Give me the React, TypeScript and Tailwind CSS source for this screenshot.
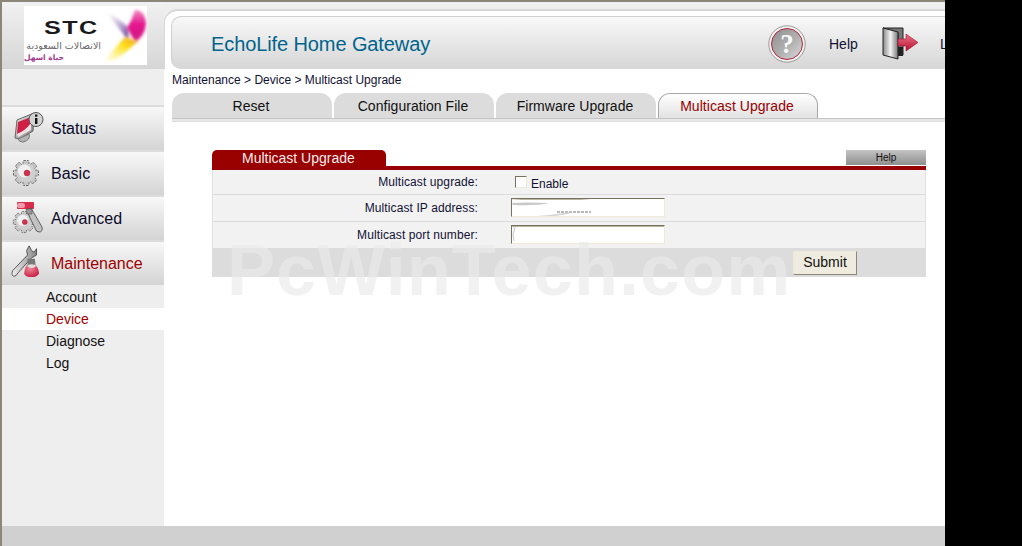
import React from "react";

const ff = { fontFamily: '"Liberation Sans", Arial, sans-serif' };

function StatusIcon() {
  return (
    <svg width="34" height="34" viewBox="0 0 34 34">
      <defs>
        <linearGradient id="st1" x1="0" y1="0" x2="1" y2="1"><stop offset="0" stopColor="#f2f2f2" /><stop offset="1" stopColor="#777" /></linearGradient>
      </defs>
      <path d="M6 9 L23 2 L22 20 L9 28 L4 27 Z" fill="url(#st1)" stroke="#666" strokeWidth="1" />
      <path d="M7 11 L20 6 L20 12 Q15 20 6 23 Z" fill="#d01f44" />
      <path d="M6 23 Q14 20 20 12 L20 19 L7 26 Z" fill="#f0dfe2" />
      <path d="M7 28 Q14 25 18 23 Q20 29 12 31 Q8 31 7 28 Z" fill="#b5b5b5" stroke="#777" />
      <circle cx="25" cy="8.5" r="7" fill="#d2d2d2" stroke="#555" />
      <rect x="24" y="7" width="2.4" height="6" fill="#111" />
      <rect x="24" y="3.5" width="2.4" height="2.2" fill="#111" />
    </svg>
  );
}

function Gear({ x = 0, y = 0, r = 1 }: { x?: number; y?: number; r?: number }) {
  const teeth = [0, 45, 90, 135, 180, 225, 270, 315];
  return (
    <g transform={`translate(${x} ${y}) scale(${r})`}>
      {teeth.map((a) => (
        <rect key={a} x="-3" y="-12.5" width="6" height="6" rx="1" fill="#c4c4c4" stroke="#555" strokeWidth="0.8" strokeDasharray="2 1" transform={`rotate(${a})`} />
      ))}
      <circle r="9.5" fill="#cfcfcf" />
      <circle cx="-1.5" cy="-2" r="6.5" fill="#f0f0f0" />
      <circle cx="1" cy="0" r="3" fill="#d0304e" stroke="#a52a40" strokeWidth="0.5" />
    </g>
  );
}

function BasicIcon() {
  return (
    <svg width="34" height="34" viewBox="0 0 34 34">
      <Gear x={15} y={17} r={1} />
    </svg>
  );
}

function AdvancedIcon() {
  return (
    <svg width="34" height="34" viewBox="0 0 34 34">
      <rect x="6" y="1" width="17" height="7" rx="1" fill="#d92b4b" />
      <rect x="6" y="2" width="8" height="5" rx="2" fill="#f29aaa" />
      <Gear x={13} y={21} r={0.85} />
      <path d="M16 9 L20 7 L31 26 Q32 31 28 31 Q25 31 24 27 L19 17 Z" fill="#c2c2c2" stroke="#444" strokeWidth="0.8" />
      <path d="M15 8 h6 v5 h-5 z" fill="#999" stroke="#444" strokeWidth="0.5" />
    </svg>
  );
}

function MaintenanceIcon() {
  return (
    <svg width="28" height="33" viewBox="0 0 34 36" preserveAspectRatio="none">
      <defs>
        <linearGradient id="mt1" x1="0" y1="0" x2="1" y2="0"><stop offset="0" stopColor="#eee" /><stop offset="1" stopColor="#888" /></linearGradient>
        <radialGradient id="mt2" cx="0.4" cy="0.3" r="0.8"><stop offset="0" stopColor="#f08497" /><stop offset="1" stopColor="#c3163a" /></radialGradient>
      </defs>
      <path d="M22 1 L19 6 L20 11 L2 28 Q0 33 3 34 Q6 35 9 30 L25 14 L31 11 L31 4 L28 8 L25 6 Z" fill="url(#mt1)" stroke="#444" strokeWidth="1" />
      <path d="M20 15 L29 15 L30 23 L20 23 Z" fill="#777" />
      <path d="M19 22 L30 22 Q34 26 34 31 Q32 35 25 35 Q17 35 16 31 Q16 26 19 22 Z" fill="url(#mt2)" />
      <ellipse cx="25" cy="23" rx="5" ry="2" fill="#ddd" />
    </svg>
  );
}

function HelpIcon() {
  return (
    <svg width="38" height="38" viewBox="0 0 38 38" className="shrink-0">
      <defs>
        <linearGradient id="hp1" x1="0" y1="0" x2="1" y2="1"><stop offset="0" stopColor="#8e8e8e" /><stop offset="0.55" stopColor="#b0b0b0" /><stop offset="1" stopColor="#dcdcdc" /></linearGradient>
      </defs>
      <circle cx="19" cy="19" r="18.2" fill="#f4f4f4" stroke="#999" />
      <circle cx="19" cy="19" r="15.5" fill="url(#hp1)" stroke="#b3263f" strokeWidth="1" />
      <text x="19" y="28" textAnchor="middle" fontSize="27" fontWeight="700" fill="#fafafa" fontFamily='"Liberation Serif", serif'>?</text>
    </svg>
  );
}

function LogoutIcon() {
  return (
    <svg width="38" height="34" viewBox="0 0 38 34" className="shrink-0">
      <defs>
        <linearGradient id="dr1" x1="0" y1="0" x2="1" y2="0"><stop offset="0" stopColor="#8a8a8a" /><stop offset="0.5" stopColor="#f4f4f4" /><stop offset="1" stopColor="#777" /></linearGradient>
        <linearGradient id="ar1" x1="0" y1="0" x2="0" y2="1"><stop offset="0" stopColor="#ef7389" /><stop offset="1" stopColor="#b51030" /></linearGradient>
      </defs>
      <path d="M1 1 H21 V28 H16 V6 Z" fill="#777" stroke="#222" />
      <rect x="16" y="20" width="5" height="9" fill="#222" />
      <path d="M1 1 L16 5 V32 L1 28 Z" fill="url(#dr1)" stroke="#222" />
      <path d="M16 12 H24 V7 L36 15.5 L24 24 V19 H16 Z" fill="url(#ar1)" stroke="#9a1028" strokeWidth="0.6" />
    </svg>
  );
}

function StcMark() {
  return (
    <svg width="46" height="59" viewBox="0 0 46 59" className="shrink-0">
      <defs>
        <filter id="bl1" x="-30%" y="-30%" width="160%" height="160%"><feGaussianBlur stdDeviation="1.4" /></filter>
        <linearGradient id="ppl" x1="0" y1="0" x2="1" y2="1"><stop offset="0" stopColor="#c9b8dc" stopOpacity="0.1" /><stop offset="1" stopColor="#5b2a8c" /></linearGradient>
        <linearGradient id="pk" x1="0" y1="0" x2="0" y2="1"><stop offset="0" stopColor="#f08cc0" /><stop offset="0.45" stopColor="#e5128f" /><stop offset="1" stopColor="#d0207f" /></linearGradient>
        <linearGradient id="yl" x1="0" y1="1" x2="1" y2="0"><stop offset="0" stopColor="#fff7a0" stopOpacity="0.25" /><stop offset="0.6" stopColor="#fde01a" /><stop offset="1" stopColor="#f39a2a" /></linearGradient>
      </defs>
      <path d="M6 7 Q18 12 28 22 L27 34 Q16 20 6 7 Z" fill="url(#ppl)" filter="url(#bl1)" />
      <path d="M34 4 Q44 4 45 18 Q44 30 34 36 L26 22 Q31 14 34 4 Z" fill="url(#pk)" filter="url(#bl1)" />
      <path d="M24 31 L30 33 Q36 35 37 35 Q28 44 14 54 Q7 56 4 54 Q14 42 24 31 Z" fill="url(#yl)" filter="url(#bl1)" />
    </svg>
  );
}

const navItems = [
  { label: "Status", icon: <StatusIcon /> },
  { label: "Basic", icon: <BasicIcon /> },
  { label: "Advanced", icon: <AdvancedIcon /> },
  { label: "Maintenance", icon: <MaintenanceIcon />, active: true },
];

const subItems = ["Account", "Device", "Diagnose", "Log"];
const tabs = ["Reset", "Configuration File", "Firmware Upgrade", "Multicast Upgrade"];

function Field({ label, children, h, border = true }: { label: string; children: React.ReactNode; h: string; border?: boolean }) {
  return (
    <div className={`flex items-center bg-[#f2f2f2] ${h} ${border ? "border-b border-[#dcdcdc]" : ""}`}>
      <div className="w-[265px] text-right text-[12px] leading-none tracking-[0.1px] text-[#111133]">{label}</div>
      {children}
    </div>
  );
}

function TextInput({ smear }: { smear?: boolean }) {
  return (
    <div className="relative mb-[2px] ml-[33px] h-[19px] w-[154px] overflow-hidden border border-[#efead8] border-l-[#77735f] border-t-[#77735f] bg-white">
      <div className="h-px w-full bg-[#b9b5a2]" />
      {smear ? (
        <svg width="154" height="19" className="absolute left-[-1px] top-[-1px]">
          <path d="M-2 1 Q40 6 80 1 L154 1 L154 2 L70 4 Q50 9 14 8 Z" fill="#fff" />
          <path d="M1 5 Q14 4 38 5 Q26 8 2 7 Z" fill="#c8c8c8" />
          <path d="M46 14 H80" stroke="#a3a3a3" strokeWidth="1.4" strokeDasharray="3 1" />
          <path d="M2 19 Q30 20 58 15" stroke="#d2d2d2" strokeWidth="1.5" fill="none" />
        </svg>
      ) : (
        <svg width="154" height="19" className="absolute left-[-1px] top-[-1px]">
          <path d="M2 3 L4 3 L2 9 L3 16" stroke="#cfcfcf" strokeWidth="1.2" fill="none" />
        </svg>
      )}
    </div>
  );
}

export default function App() {
  return (
    <div className="relative flex h-[546px] w-[1022px] overflow-hidden bg-black" style={ff}>
      <div className="flex w-[945px] flex-col border-l-2 border-t-2 border-[#8a8778] bg-white">
        <div className="flex min-h-0 flex-1">
          {/* Sidebar */}
          <aside className="flex w-[162px] shrink-0 flex-col bg-[#eeeeee]">
            <div className="flex h-[67px] shrink-0 items-start bg-gradient-to-b from-[#f1f1f1] to-[#d6d6d6] pl-[22px] pt-[4px]">
              <div className="flex h-[59px] w-[123px] items-start overflow-hidden bg-white">
                <div className="flex w-[77px] shrink-0 flex-col pl-[2px] pt-[15px]">
                  <div className="h-[14px] w-fit origin-left translate-x-[18px] scale-x-[1.4] text-[18px] font-bold leading-[14px] tracking-[1px] whitespace-nowrap text-[#1a1a1a]">STC</div>
                  <div className="mt-[5px] h-[12px] text-[9.5px] leading-[12px] whitespace-nowrap text-[#666]" dir="rtl" style={{ fontFamily: '"DejaVu Sans", sans-serif' }}>الاتصالات السعودية</div>
                  <div className="h-[11px] pr-[37px] text-[7.5px] font-bold leading-[11px] whitespace-nowrap text-[#a03a90]" dir="rtl" style={{ fontFamily: '"DejaVu Sans", sans-serif' }}>حياة اسهل</div>
                </div>
                <StcMark />
              </div>
            </div>
            <div className="mt-[36px] flex flex-col">
              {navItems.map((n) => (
                <div key={n.label} className="flex h-[45px] items-center border-t-2 border-[#dcdcdc] bg-gradient-to-b from-[#f8f8f8] to-[#d4d4d4] pl-[9px]">
                  <div className={`flex w-[40px] shrink-0 items-center justify-start ${n.active ? "mb-[5px]" : "mb-[2px]"}`}>{n.icon}</div>
                  <span className={`text-[16px] ${n.active ? "text-[#a00000]" : "text-[#0a0a2a]"}`}>{n.label}</span>
                </div>
              ))}
            </div>
            <div className="flex flex-col pt-px">
              {subItems.map((s) => (
                <div key={s} className={`flex h-[22px] items-center pl-[44px] text-[14px] ${s === "Device" ? "bg-white text-[#a00000]" : "text-[#111]"}`}>
                  {s}
                </div>
              ))}
            </div>
          </aside>

          {/* Main */}
          <main className="flex min-w-0 flex-1 flex-col overflow-hidden">
            <div className="h-[67px] shrink-0 bg-[#efefef] pt-[7px]">
              <div className="h-[60px] rounded-tl-[14px] border-l border-t-2 border-[#d8d8d8] bg-white pl-[6px] pt-[5px]">
                <div className="flex h-[53px] items-center overflow-hidden rounded-l-[10px] border-l border-t border-[#cfcfcf] bg-gradient-to-b from-[#f8f8f8] to-[#d6d6d6] pl-[39px] pt-[2px]">
                  <span className="w-[557px] shrink-0 text-[20px] tracking-[-0.1px] text-[#00648c]">EchoLife Home Gateway</span>
                  <HelpIcon />
                  <span className="ml-[23px] w-[53px] shrink-0 text-[14px] text-[#111133]">Help</span>
                  <LogoutIcon />
                  <span className="ml-[20px] shrink-0 text-[14px] text-[#111133]">Logout</span>
                </div>
              </div>
            </div>
            <div className="h-[24px] pl-[8px] pt-[4px] text-[12px] leading-[15px] text-[#111133]">Maintenance &gt; Device &gt; Multicast Upgrade</div>
            <div className="flex gap-[2px] pl-[8px]">
              {tabs.map((t, i) => (
                <div
                  key={t}
                  className={
                    i === 3
                      ? "flex h-[25px] w-[160px] items-center justify-center rounded-t-[12px] border border-b-0 border-[#a8a8a8] bg-gradient-to-b from-[#ffffff] to-[#e2e2e2] pr-[2px] pt-[1px] text-[14px] tracking-[0.05px] text-[#990000]"
                      : "flex h-[25px] w-[160px] items-center justify-center rounded-t-[12px] bg-[#dcdcdc] pr-[2px] pt-[2px] text-[14px] tracking-[0.05px] text-[#111]"
                  }
                >
                  {t}
                </div>
              ))}
            </div>
            <div className="ml-[8px] h-[3px] border-t border-[#c4c4c4] bg-[#e8e8e8]" />
            <div className="ml-[8px] h-px bg-[#dddddd]" />

            {/* Form */}
            <div className="ml-[48px] mt-[28px] w-[714px]">
              <div className="flex h-[16px] items-start justify-between">
                <div className="flex h-[16px] w-[174px] items-center rounded-t-[5px] bg-[#990000] pl-[30px] text-[14px] text-[#f3eded]">Multicast Upgrade</div>
                <div className="flex h-[15px] w-[80px] items-center justify-center bg-gradient-to-b from-[#c4c4c4] to-[#8f8f8f] text-[10px] text-[#111]">Help</div>
              </div>
              <div className="h-[4px] bg-[#990000]" />
              <div className="border-x border-[#e0e0e0]">
                <Field label="Multicast upgrade:" h="h-[25px]">
                  <div className="ml-[37px] flex items-center pt-[3px]">
                    <div className="mb-[4px] h-[12px] w-[12px] border border-[#efead8] border-l-[#77735f] border-t-[#77735f] bg-white" />
                    <span className="ml-[4px] text-[12px] text-[#111133]">Enable</span>
                  </div>
                </Field>
                <Field label="Multicast IP address:" h="h-[27px]">
                  <TextInput smear />
                </Field>
                <Field label="Multicast port number:" h="h-[26px]" border={false}>
                  <TextInput />
                </Field>
              </div>
              <div className="flex h-[29px] justify-end bg-[#dcdcdc] pr-[69px] pt-[3px]">
                <button className="relative z-10 flex h-[24px] w-[64px] items-center justify-center border border-[#efead8] border-b-[#8a8778] border-r-[#8a8778] bg-[#efecdf] pb-[2px] text-[14px] text-[#111]">Submit</button>
              </div>
            </div>
          </main>
        </div>
        <div className="h-[20px] shrink-0 bg-[#d0d0d0]" />
      </div>
      <div className="pointer-events-none absolute left-[227px] top-[244px] text-[72px] font-bold leading-[52px] tracking-[1.1px] whitespace-nowrap text-[#ebebeb] opacity-[0.66]">PcWinTech.com</div>
    </div>
  );
}
